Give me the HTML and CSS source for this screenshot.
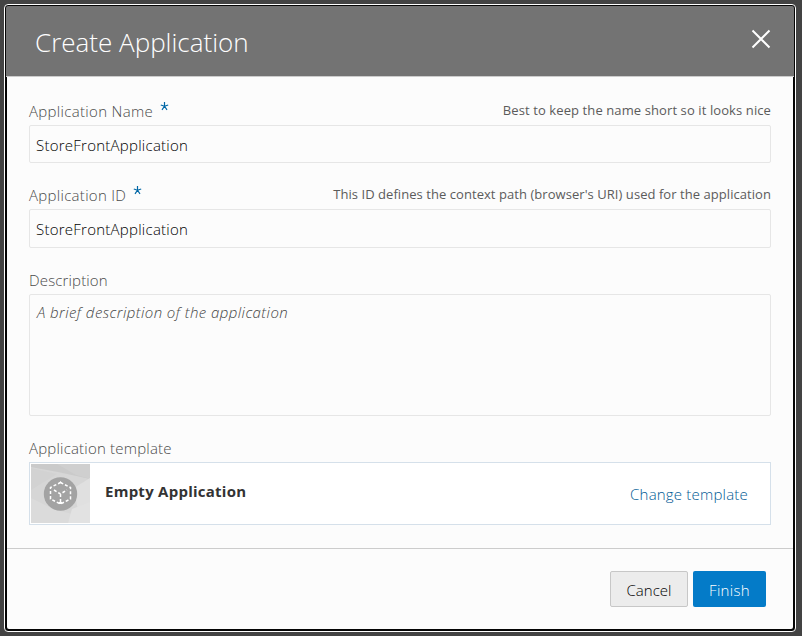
FILE: index.html
```html
<!DOCTYPE html>
<html lang="en">
<head>
<meta charset="utf-8">
<title>Create Application</title>
<link rel="stylesheet" href="styles.css">
</head>
<body>
<div class="dialog">
  <header class="header">
    <h1 class="title">Create Application</h1>
    <svg class="close" width="20" height="20" viewBox="0 0 20 20"><path d="M1.5 1.5L18.5 18.5M18.5 1.5L1.5 18.5" stroke="#fff" stroke-width="2" fill="none"/></svg>
  </header>
  <main class="content">
    <div class="row row-name">
      <span class="label"><span class="t-name">Application Name</span><svg class="star" width="9" height="9" viewBox="0 0 9 9"><path d="M4.5 0V4.2M.8 3L4.5 4.2L8.2 3M2 7.8L4.5 4.2L7 7.8"/></svg></span>
      <span class="hint t-hint1">Best to keep the name short so it looks nice</span>
    </div>
    <div class="input input-name"><span class="t-value">StoreFrontApplication</span></div>
    <div class="row row-id">
      <span class="label"><span class="t-id">Application ID</span><svg class="star" width="9" height="9" viewBox="0 0 9 9"><path d="M4.5 0V4.2M.8 3L4.5 4.2L8.2 3M2 7.8L4.5 4.2L7 7.8"/></svg></span>
      <span class="hint t-hint2">This ID defines the context path (browser's URI) used for the application</span>
    </div>
    <div class="input input-id"><span class="t-value">StoreFrontApplication</span></div>
    <div class="row row-desc"><span class="label t-desc">Description</span></div>
    <div class="textarea"><span class="t-place">A brief description of the application</span></div>
    <div class="row row-template"><span class="label t-template">Application template</span></div>
    <div class="template">
      <svg class="thumb" width="59" height="59" viewBox="0 0 59 59">
        <rect width="59" height="59" fill="#d6d6d6"/>
        <path d="M0 0H59V15L27 8L0 3Z" fill="#cacaca"/>
        <path d="M26 0H59V15L45 11Z" fill="#cfcfcf"/>
        <path d="M0 4L26 10L0 26Z" fill="#d2d2d2"/>
        <path d="M59 14L43 24L46 42L59 59Z" fill="#e0e0e0"/>
        <path d="M0 34L22 45L41 50L37 59H0Z" fill="#dbdbdb"/>
        <path d="M41 45L59 38V59H37Z" fill="#e2e2e2"/>
        <circle cx="29.5" cy="30" r="16.7" fill="#a3a3a3"/>
        <g fill="none" stroke="#fff" stroke-width="1.5">
          <path d="M29.5 18.5L39.5 23.5V35L29.5 40L19.5 35V23.5Z" stroke-dasharray="3 2"/>
          <path d="M23 26L29.5 30L36 26M29.5 30V39" stroke-dasharray="3 2"/>
        </g>
        <path d="M28 19L29.5 17L31 19ZM28 38H31V40H28Z" fill="#fff"/>
      </svg>
      <strong class="t-empty">Empty Application</strong>
      <a class="link">Change template</a>
    </div>
  </main>
  <footer class="footer">
    <div class="button cancel"><span>Cancel</span></div>
    <div class="button finish"><span>Finish</span></div>
  </footer>
</div>
</body>
</html>
```
FILE: styles.css
```css
* { box-sizing: border-box; }
body {
  margin: 0;
  height: 636px;
  padding: 4px 6px 4px 4px;
  overflow: hidden;
  background: #434343;
  color: #333;
  font-family: "Open Sans", "Noto Sans", sans-serif;
  font-size: 15px;
  font-weight: 300;
  line-height: 20px;
  white-space: nowrap;
}
.dialog {
  width: 792px;
  height: 628px;
  padding: 1px 1px 2px;
  border: 1px solid #fff;
  border-radius: 4px;
  background: #050505;
  display: flex;
  flex-direction: column;
}
.header {
  height: 71px;
  padding: 0 23px 0 29px;
  display: flex;
  justify-content: space-between;
  background: #737373;
  border-bottom: 1px solid #ccc;
  border-radius: 2px 2px 0 0;
}
.title {
  margin: 18px 0 0;
  color: #fff;
  font-size: 26px;
  line-height: 36px;
  font-weight: 300;
}
.close { margin-top: 23px; }
.content {
  height: 471px;
  margin: 0 1px;
  padding: 0 22px;
  background: #fcfcfc;
}
.row { display: flex; justify-content: space-between; color: #4a4a4a; }
.row-name { height: 48px; padding-top: 24px; }
.row-id { height: 46px; padding-top: 22px; }
.row-desc { height: 46px; padding-top: 22px; }
.row-template { height: 46px; padding-top: 22px; }
.label { display: flex; }
.t-name { letter-spacing: .32px; }
.t-id { letter-spacing: .3px; }
.t-desc { letter-spacing: .15px; }
.t-template { letter-spacing: .2px; }
.star { margin: 1px 0 0 7px; fill: none; stroke: #0067a6; stroke-width: 1.2; }
.hint { color: #5b5b5b; font-size: 13px; line-height: 18px; font-weight: 400; }
.t-hint1 { letter-spacing: .1px; }
.t-hint2 { letter-spacing: .055px; }
.input, .textarea { border: 1px solid #e6e6e6; border-radius: 2px; padding: 9px 6px; }
.input { height: 38px; color: #000; letter-spacing: .25px; }
.input-id { height: 39px; }
.textarea { height: 122px; padding-top: 7px; padding-left: 7px; color: #444; font-style: italic; letter-spacing: .43px; }
.template {
  height: 63px;
  padding: 1px 22px 1px 1px;
  display: flex;
  background: #fff;
  border: 1px solid #d5e0ea;
}
.thumb { flex: none; }
.t-empty { margin: 17px 0 0 15px; font-weight: 700; letter-spacing: .25px; }
.link { margin: 20px 0 0 auto; color: #005a94; letter-spacing: .2px; }
.footer {
  flex: 1;
  margin: 0 1px;
  padding: 22px 27px;
  display: flex;
  justify-content: flex-end;
  gap: 5px;
  background: #fcfcfc;
  border-top: 1px solid #ccc;
  border-radius: 0 0 2px 2px;
}
.button { height: 36px; border-radius: 2px; padding-top: 9px; text-align: center; }
.cancel { width: 78px; padding-top: 8px; color: #000; background: #ececec; border: 1px solid #c7c7c7; }
.finish { width: 73px; color: #fff; background: #047bc8; letter-spacing: .3px; }
```
